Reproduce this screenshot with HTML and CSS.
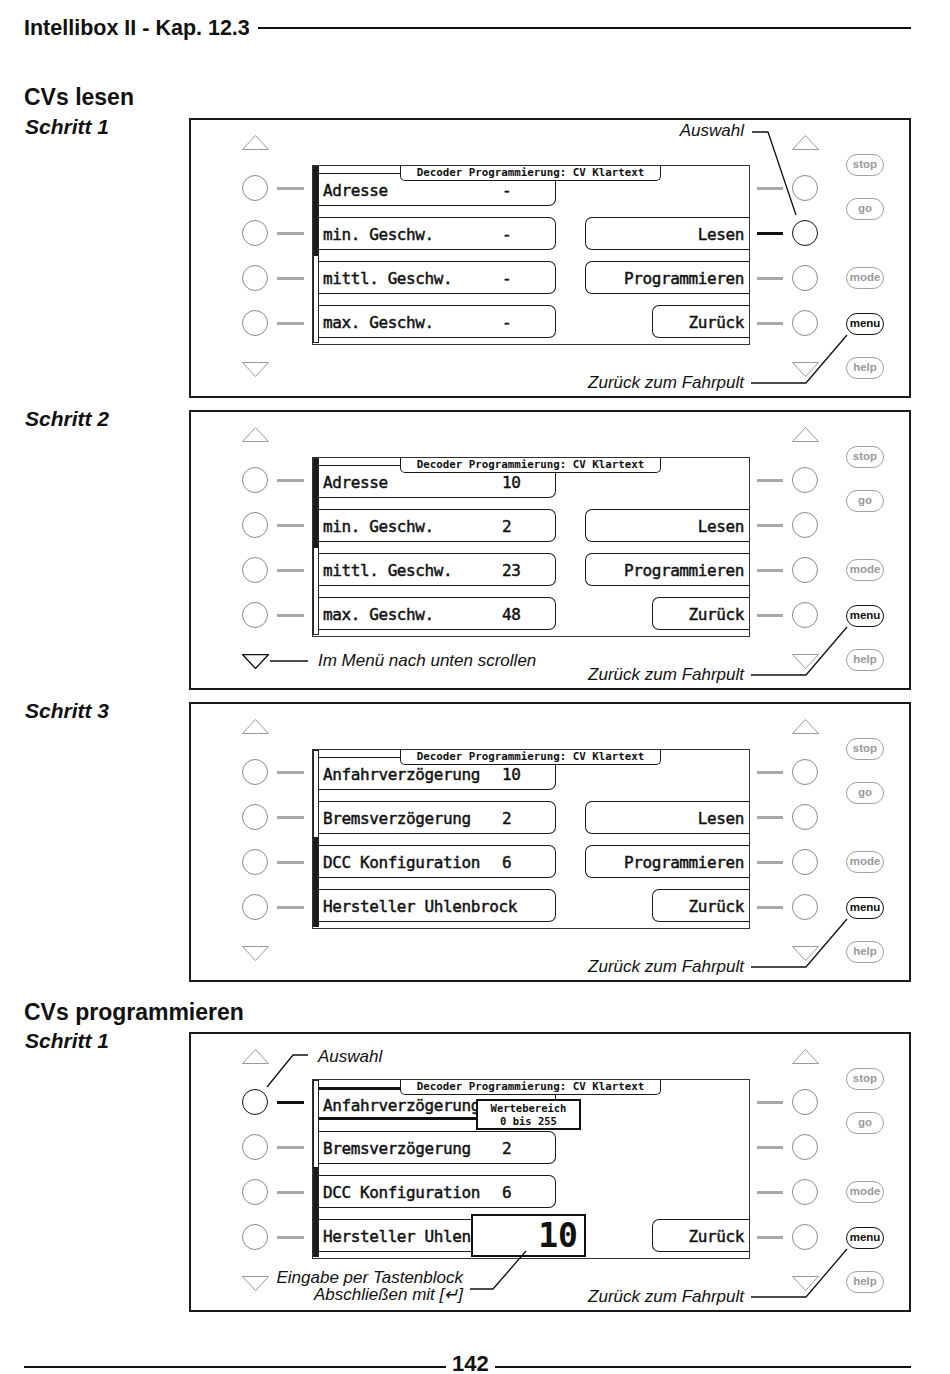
FILE: index.html
```html
<!DOCTYPE html>
<html lang="de">
<head>
<meta charset="utf-8">
<title>Intellibox II - Kap. 12.3</title>
<link rel="stylesheet" href="styles.css">
</head>
<body>
<div class="page">
  <header class="top">
    <span class="chap">Intellibox II - Kap. 12.3</span>
    <span class="rule"></span>
  </header>

  <h2 class="sec first">CVs lesen</h2>

  <!-- Schritt 1 -->
  <div class="step">
    <div class="step-label">Schritt 1</div>
    <div class="panel">
      <div class="side left">
        <svg class="tri up" width="27" height="15" viewBox="0 0 27 15"><polygon points="0.5,14.5 13.5,0.5 26.5,14.5"/></svg>
        <div class="key"><span class="btn"></span><span class="dash"></span></div>
        <div class="key"><span class="btn"></span><span class="dash"></span></div>
        <div class="key"><span class="btn"></span><span class="dash"></span></div>
        <div class="key"><span class="btn"></span><span class="dash"></span></div>
        <svg class="tri down" width="27" height="15" viewBox="0 0 27 15"><polygon points="0.5,0.5 26.5,0.5 13.5,14.5"/></svg>
      </div>
      <div class="display">
        <div class="scroll"><span class="thumb"></span></div>
        <div class="rows">
          <div class="item l"><span class="lbl">Adresse</span><span class="val">-</span></div>
          <div class="empty"></div>
          <div class="item l"><span class="lbl">min. Geschw.</span><span class="val">-</span></div>
          <div class="item r">Lesen</div>
          <div class="item l"><span class="lbl">mittl. Geschw.</span><span class="val">-</span></div>
          <div class="item r">Programmieren</div>
          <div class="item l"><span class="lbl">max. Geschw.</span><span class="val">-</span></div>
          <div class="item r short">Zurück</div>
        </div>
        <div class="tab">Decoder Programmierung: CV Klartext</div>
      </div>
      <div class="side right">
        <svg class="tri up" width="27" height="15" viewBox="0 0 27 15"><polygon points="0.5,14.5 13.5,0.5 26.5,14.5"/></svg>
        <div class="key"><span class="dash"></span><span class="btn"></span></div>
        <div class="key sel"><span class="dash"></span><span class="btn"></span></div>
        <div class="key"><span class="dash"></span><span class="btn"></span></div>
        <div class="key"><span class="dash"></span><span class="btn"></span></div>
        <svg class="tri down" width="27" height="15" viewBox="0 0 27 15"><polygon points="0.5,0.5 26.5,0.5 13.5,14.5"/></svg>
      </div>
      <div class="pills">
        <span class="pill stop">stop</span>
        <span class="pill go">go</span>
        <span class="pill mode">mode</span>
        <span class="pill menu">menu</span>
        <span class="pill help">help</span>
      </div>
      <svg class="ann" width="718" height="276" viewBox="0 0 718 276">
        <polyline points="561,12 577,12 605,95"/>
        <polyline points="560,263 615,263 656,215"/>
      </svg>
      <span class="note r-auswahl">Auswahl</span>
      <span class="note r-back">Zurück zum Fahrpult</span>
    </div>
  </div>

  <!-- Schritt 2 -->
  <div class="step">
    <div class="step-label">Schritt 2</div>
    <div class="panel">
      <div class="side left">
        <svg class="tri up" width="27" height="15" viewBox="0 0 27 15"><polygon points="0.5,14.5 13.5,0.5 26.5,14.5"/></svg>
        <div class="key"><span class="btn"></span><span class="dash"></span></div>
        <div class="key"><span class="btn"></span><span class="dash"></span></div>
        <div class="key"><span class="btn"></span><span class="dash"></span></div>
        <div class="key"><span class="btn"></span><span class="dash"></span></div>
        <svg class="tri down dark" width="27" height="15" viewBox="0 0 27 15"><polygon points="0.5,0.5 26.5,0.5 13.5,14.5"/></svg>
      </div>
      <div class="display">
        <div class="scroll"><span class="thumb"></span></div>
        <div class="rows">
          <div class="item l"><span class="lbl">Adresse</span><span class="val">10</span></div>
          <div class="empty"></div>
          <div class="item l"><span class="lbl">min. Geschw.</span><span class="val">2</span></div>
          <div class="item r">Lesen</div>
          <div class="item l"><span class="lbl">mittl. Geschw.</span><span class="val">23</span></div>
          <div class="item r">Programmieren</div>
          <div class="item l"><span class="lbl">max. Geschw.</span><span class="val">48</span></div>
          <div class="item r short">Zurück</div>
        </div>
        <div class="tab">Decoder Programmierung: CV Klartext</div>
      </div>
      <div class="side right">
        <svg class="tri up" width="27" height="15" viewBox="0 0 27 15"><polygon points="0.5,14.5 13.5,0.5 26.5,14.5"/></svg>
        <div class="key"><span class="dash"></span><span class="btn"></span></div>
        <div class="key"><span class="dash"></span><span class="btn"></span></div>
        <div class="key"><span class="dash"></span><span class="btn"></span></div>
        <div class="key"><span class="dash"></span><span class="btn"></span></div>
        <svg class="tri down" width="27" height="15" viewBox="0 0 27 15"><polygon points="0.5,0.5 26.5,0.5 13.5,14.5"/></svg>
      </div>
      <div class="pills">
        <span class="pill stop">stop</span>
        <span class="pill go">go</span>
        <span class="pill mode">mode</span>
        <span class="pill menu">menu</span>
        <span class="pill help">help</span>
      </div>
      <svg class="ann" width="718" height="276" viewBox="0 0 718 276">
        <line x1="79" y1="249" x2="117" y2="249"/>
        <polyline points="560,263 615,263 656,215"/>
      </svg>
      <span class="note l-scroll">Im Menü nach unten scrollen</span>
      <span class="note r-back">Zurück zum Fahrpult</span>
    </div>
  </div>

  <!-- Schritt 3 -->
  <div class="step">
    <div class="step-label">Schritt 3</div>
    <div class="panel">
      <div class="side left">
        <svg class="tri up" width="27" height="15" viewBox="0 0 27 15"><polygon points="0.5,14.5 13.5,0.5 26.5,14.5"/></svg>
        <div class="key"><span class="btn"></span><span class="dash"></span></div>
        <div class="key"><span class="btn"></span><span class="dash"></span></div>
        <div class="key"><span class="btn"></span><span class="dash"></span></div>
        <div class="key"><span class="btn"></span><span class="dash"></span></div>
        <svg class="tri down" width="27" height="15" viewBox="0 0 27 15"><polygon points="0.5,0.5 26.5,0.5 13.5,14.5"/></svg>
      </div>
      <div class="display">
        <div class="scroll bottom"><span class="thumb"></span></div>
        <div class="rows">
          <div class="item l"><span class="lbl">Anfahrverzögerung</span><span class="val">10</span></div>
          <div class="empty"></div>
          <div class="item l"><span class="lbl">Bremsverzögerung</span><span class="val">2</span></div>
          <div class="item r">Lesen</div>
          <div class="item l"><span class="lbl">DCC Konfiguration</span><span class="val">6</span></div>
          <div class="item r">Programmieren</div>
          <div class="item l"><span class="lbl">Hersteller Uhlenbrock</span></div>
          <div class="item r short">Zurück</div>
        </div>
        <div class="tab">Decoder Programmierung: CV Klartext</div>
      </div>
      <div class="side right">
        <svg class="tri up" width="27" height="15" viewBox="0 0 27 15"><polygon points="0.5,14.5 13.5,0.5 26.5,14.5"/></svg>
        <div class="key"><span class="dash"></span><span class="btn"></span></div>
        <div class="key"><span class="dash"></span><span class="btn"></span></div>
        <div class="key"><span class="dash"></span><span class="btn"></span></div>
        <div class="key"><span class="dash"></span><span class="btn"></span></div>
        <svg class="tri down" width="27" height="15" viewBox="0 0 27 15"><polygon points="0.5,0.5 26.5,0.5 13.5,14.5"/></svg>
      </div>
      <div class="pills">
        <span class="pill stop">stop</span>
        <span class="pill go">go</span>
        <span class="pill mode">mode</span>
        <span class="pill menu">menu</span>
        <span class="pill help">help</span>
      </div>
      <svg class="ann" width="718" height="276" viewBox="0 0 718 276">
        <polyline points="560,263 615,263 656,215"/>
      </svg>
      <span class="note r-back">Zurück zum Fahrpult</span>
    </div>
  </div>

  <h2 class="sec second">CVs programmieren</h2>

  <!-- Programmieren Schritt 1 -->
  <div class="step">
    <div class="step-label">Schritt 1</div>
    <div class="panel">
      <div class="side left">
        <svg class="tri up" width="27" height="15" viewBox="0 0 27 15"><polygon points="0.5,14.5 13.5,0.5 26.5,14.5"/></svg>
        <div class="key sel"><span class="btn"></span><span class="dash"></span></div>
        <div class="key"><span class="btn"></span><span class="dash"></span></div>
        <div class="key"><span class="btn"></span><span class="dash"></span></div>
        <div class="key"><span class="btn"></span><span class="dash"></span></div>
        <svg class="tri down" width="27" height="15" viewBox="0 0 27 15"><polygon points="0.5,0.5 26.5,0.5 13.5,14.5"/></svg>
      </div>
      <div class="display">
        <div class="scroll bottom"><span class="thumb"></span></div>
        <div class="rows">
          <div class="item l sel"><span class="lbl">Anfahrverzögerung</span></div>
          <div class="empty"></div>
          <div class="item l"><span class="lbl">Bremsverzögerung</span><span class="val">2</span></div>
          <div class="empty"></div>
          <div class="item l"><span class="lbl">DCC Konfiguration</span><span class="val">6</span></div>
          <div class="empty"></div>
          <div class="item l"><span class="lbl">Hersteller Uhlenbrock</span></div>
          <div class="item r short">Zurück</div>
        </div>
        <div class="tab">Decoder Programmierung: CV Klartext</div>
        <div class="popup range">Wertebereich<br>0 bis 255</div>
        <div class="popup entry">10</div>
      </div>
      <div class="side right">
        <svg class="tri up" width="27" height="15" viewBox="0 0 27 15"><polygon points="0.5,14.5 13.5,0.5 26.5,14.5"/></svg>
        <div class="key"><span class="dash"></span><span class="btn"></span></div>
        <div class="key"><span class="dash"></span><span class="btn"></span></div>
        <div class="key"><span class="dash"></span><span class="btn"></span></div>
        <div class="key"><span class="dash"></span><span class="btn"></span></div>
        <svg class="tri down" width="27" height="15" viewBox="0 0 27 15"><polygon points="0.5,0.5 26.5,0.5 13.5,14.5"/></svg>
      </div>
      <div class="pills">
        <span class="pill stop">stop</span>
        <span class="pill go">go</span>
        <span class="pill mode">mode</span>
        <span class="pill menu">menu</span>
        <span class="pill help">help</span>
      </div>
      <svg class="ann" width="718" height="276" viewBox="0 0 718 276">
        <polyline points="117,21 102,21 76,53"/>
        <polyline points="279,255 302,255 335,217"/>
        <polyline points="560,263 615,263 656,215"/>
      </svg>
      <span class="note l-auswahl">Auswahl</span>
      <span class="note l-entry">Eingabe per Tastenblock<br>Abschließen mit [↵]</span>
      <span class="note r-back">Zurück zum Fahrpult</span>
    </div>
  </div>

  <footer class="foot">
    <span class="rule left"></span>
    <span class="num">142</span>
    <span class="rule"></span>
  </footer>
</div>
</body>
</html>
```

FILE: styles.css
```css
body {
  margin: 0;
  background: #fff;
  color: #111;
  font-family: "Liberation Sans", Arial, sans-serif;
}

.page {
  width: 887px;
  padding: 16px 0 0 24px;
}

/* header */
.top {
  display: flex;
  align-items: center;
  gap: 8px;
  height: 24px;
}
.chap {
  font-weight: 700;
  font-size: 21.5px;
  line-height: 24px;
  white-space: nowrap;
}
.rule {
  flex: 1;
  height: 2px;
  background: #111;
}

.sec {
  margin: 44px 0 0;
  font-size: 23px;
  line-height: 27px;
  font-weight: 700;
}
.sec.second { margin-top: 17px; }

.step {
  display: grid;
  grid-template-columns: 165px 722px;
  margin-top: 12px;
}
.sec + .step { margin-top: 7px; }
.sec.second + .step { margin-top: 6px; }

.step-label {
  font-size: 21px;
  line-height: 24px;
  font-weight: 700;
  font-style: italic;
  margin-top: -3px;
  padding-left: 1px;
}

/* panel */
.panel {
  position: relative;
  box-sizing: border-box;
  width: 722px;
  height: 280px;
  border: 2px solid #1a1a1a;
  display: flex;
  align-items: flex-start;
  padding-left: 51px;
}

.side {
  display: flex;
  flex-direction: column;
}
.side.left { width: 62px; align-items: flex-start; }
.side.right { width: 61px; align-items: flex-end; margin-left: 7px; }

.tri { display: block; }
.tri polygon { fill: none; stroke: #9a9a9a; stroke-width: 1; }
.tri.dark polygon { stroke: #111; stroke-width: 1.3; }
.tri.up { margin-top: 15px; }
.tri.down { margin-top: 26px; }
.side.right .tri { margin-right: -1px; }

.key {
  display: flex;
  align-items: center;
  gap: 9px;
  margin-top: 19px;
}
.tri.up + .key { margin-top: 25px; }
.btn {
  box-sizing: border-box;
  width: 26px;
  height: 26px;
  border: 1.2px solid #8a8a8a;
  border-radius: 50%;
}
.dash {
  width: 27px;
  height: 3px;
  background: #a8a8a8;
}
.side.right .dash { width: 26px; }
.key.sel .btn { border: 1.5px solid #111; }
.key.sel .dash { background: #111; }

/* display */
.display {
  position: relative;
  box-sizing: border-box;
  width: 438px;
  height: 180px;
  margin: 45px 0 0 8px;
  border: 1.5px solid #333;
  display: flex;
  align-items: flex-start;
  font-family: "DejaVu Sans Mono", monospace;
}
.scroll {
  box-sizing: border-box;
  width: 6px;
  height: 177px;
  border: 1px solid #222;
  display: flex;
  flex-direction: column;
}
.scroll.bottom { justify-content: flex-end; }
.thumb {
  height: 51%;
  background: #1a1a1a;
}
.rows {
  flex: 1;
  display: grid;
  grid-template-columns: 237px 1fr;
  grid-auto-rows: 33px;
  column-gap: 29px;
  row-gap: 11px;
  padding-top: 7px;
}
.item {
  box-sizing: border-box;
  height: 33px;
  border: 1.5px solid #1a1a1a;
  display: flex;
  font-size: 16px;
  letter-spacing: -0.4px;
  line-height: 26px;
  padding-top: 4px;
  white-space: nowrap;
  color: #111;
  -webkit-text-stroke: 0.45px #111;
}
.item.l {
  border-left: none;
  border-radius: 0 7px 7px 0;
}
.item.r {
  border-right: none;
  border-radius: 7px 0 0 7px;
  justify-content: flex-end;
  padding-right: 5px;
}
.item.r.short {
  justify-self: end;
  width: 97px;
}
.item.sel {
  border-top: 3px solid #111;
  border-bottom: 3px solid #111;
  padding-top: 2.5px;
}
.lbl {
  box-sizing: border-box;
  width: 183px;
  padding-left: 4px;
  flex: none;
}
.tab {
  position: absolute;
  left: 87px;
  top: 0;
  box-sizing: border-box;
  width: 261px;
  height: 15px;
  background: #fff;
  border: 1.5px solid #1a1a1a;
  border-top: none;
  border-radius: 0 0 5px 5px;
  font-size: 10.8px;
  font-weight: 700;
  line-height: 13px;
  text-align: center;
  white-space: nowrap;
}

.popup {
  position: absolute;
  box-sizing: border-box;
  background: #fff;
  border: 2px solid #111;
  font-weight: 700;
}
.popup.range {
  left: 163px;
  top: 19px;
  width: 105px;
  height: 31px;
  font-size: 10.5px;
  line-height: 12.5px;
  padding-top: 1px;
  text-align: center;
}
.popup.entry {
  left: 158px;
  top: 134px;
  width: 115px;
  height: 43px;
  font-size: 33px;
  line-height: 39px;
  text-align: right;
  padding-right: 6px;
}

/* pills */
.pills {
  width: 38px;
  margin-left: 28px;
  display: flex;
  flex-direction: column;
}
.pill {
  box-sizing: border-box;
  height: 22px;
  border: 1.3px solid #a0a0a0;
  border-radius: 11px;
  font-size: 11.5px;
  font-weight: 700;
  line-height: 19px;
  text-align: center;
  color: #9a9a9a;
}
.pill.stop { margin-top: 34px; }
.pill.go { margin-top: 22px; }
.pill.mode { margin-top: 47px; }
.pill.menu { margin-top: 24px; border: 1.5px solid #111; color: #111; }
.pill.help { margin-top: 22px; }

/* annotations */
.ann {
  position: absolute;
  left: 0;
  top: 0;
  pointer-events: none;
}
.ann polyline,
.ann line {
  fill: none;
  stroke: #111;
  stroke-width: 1.3;
}
.note {
  position: absolute;
  font-size: 17px;
  font-style: italic;
  line-height: 18px;
  white-space: nowrap;
  color: #111;
}
.note.r-auswahl { right: 165px; top: 2px; }
.note.r-back { right: 165px; top: 254px; }
.note.l-scroll { left: 127px; top: 240px; }
.note.l-auswahl { left: 127px; top: 14px; }
.note.l-entry {
  right: 446px;
  top: 235px;
  line-height: 17px;
  text-align: right;
}

/* footer */
.foot {
  display: flex;
  align-items: flex-start;
  gap: 6px;
  height: 20px;
  margin-top: 42px;
}
.foot .rule { margin-top: 12px; }
.foot .rule.left { flex: 0 0 422px; }
.num {
  font-size: 22px;
  font-weight: 700;
  line-height: 20px;
}
```
